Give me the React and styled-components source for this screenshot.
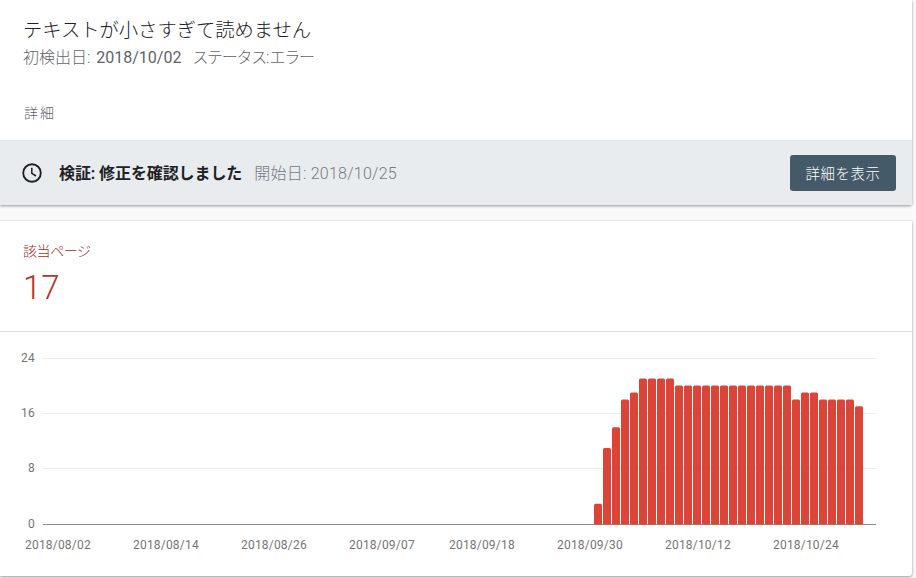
import styled, { createGlobalStyle } from "styled-components";

const GlobalStyle = createGlobalStyle`
  html, body {
    margin: 0;
    padding: 0;
    background: #fafafa;
  }
  body {
    font-family: Roboto, "Noto Sans CJK JP", sans-serif;
    overflow: hidden;
  }
`;

const Page = styled.div`
  width: 912px;
  height: 578px;
  display: flex;
  flex-direction: column;
  gap: 16px;
`;

const Card = styled.section`
  background: #fff;
  border-radius: 0 0 3px 0;
  box-shadow: 0 1px 3px rgba(60, 64, 67, 0.55);
`;

const IssueHead = styled.div`
  height: 141px;
  box-sizing: border-box;
  padding: 18px 24px 0;
  border-bottom: 1px solid #e3e5e7;
`;

const Title = styled.h1`
  margin: 0 0 0 -1px;
  font-size: 19.3px;
  line-height: 25px;
  font-weight: 300;
  color: #202124;
`;

const Meta = styled.div`
  display: flex;
  gap: 11px;
  margin: 3px 0 0 -1px;
  font-size: 16px;
  line-height: 24px;
  font-weight: 300;
  color: #5f6368;
`;

const DateText = styled.span`
  margin-left: 2px;
  font-weight: 400;
`;

const StatusText = styled.span`
  letter-spacing: -1.3px;
  word-spacing: -1px;
`;

const Details = styled.div`
  margin-top: 33px;
  font-size: 14px;
  line-height: 20px;
  font-weight: 300;
  letter-spacing: 2px;
  color: #5f6368;
`;

const ValidationBar = styled.div`
  height: 64px;
  display: flex;
  align-items: center;
  padding: 0 16px 0 22px;
  background: #e9ecef;
`;

const ClockIcon = styled.svg`
  width: 20px;
  height: 20px;
  margin-right: 17px;
  flex: none;
`;

const ValidationLabel = styled.strong`
  padding-bottom: 2px;
  font-size: 16px;
  font-weight: 700;
  letter-spacing: -0.1px;
  color: #202124;
`;

const ValidationDate = styled.span`
  margin-left: 12px;
  padding-bottom: 2px;
  font-size: 16px;
  font-weight: 300;
  letter-spacing: 0.25px;
  color: #757a80;
`;

const DetailButton = styled.button`
  margin-left: auto;
  width: 106px;
  height: 36px;
  padding: 0 0 2px;
  border: none;
  border-radius: 3px;
  background: #455a68;
  color: #fff;
  font-family: inherit;
  font-size: 14.4px;
  font-weight: 300;
  letter-spacing: 0.6px;
`;

const AffectedHead = styled.div`
  height: 111px;
  box-sizing: border-box;
  padding: 20px 24px 0 23px;
  border-bottom: 1px solid #e0e0e0;
`;

const AffectedLabel = styled.div`
  font-size: 14px;
  line-height: 20px;
  font-weight: 300;
  letter-spacing: -0.4px;
  color: #a8291f;
`;

const AffectedCount = styled.div`
  margin-top: 8px;
  font-size: 33px;
  line-height: 38px;
  font-weight: 300;
  color: #b3362b;
`;

const ChartWrap = styled.div`
  height: 244px;
`;

const Chart = styled.svg`
  display: block;
  width: 912px;
  height: 244px;
`;

const AxisText = styled.text`
  font-family: Roboto, sans-serif;
  font-size: 12px;
  letter-spacing: 0.2px;
  fill: #757575;
`;

const COUNTS = [
  3, 11, 14, 18, 19, 21, 21, 21, 21, 20, 20, 20, 20, 20, 20, 20, 20, 20, 20, 20, 20, 20,
  18, 19, 19, 18, 18, 18, 18, 17,
];
// y of each grid line inside the svg, which starts at y=332 on the page
const Y_TICKS = [
  [24, 26.5],
  [16, 81.5],
  [8, 136.5],
  [0, 192.5],
];
const X_TICKS = [
  ["2018/08/02", 25],
  ["2018/08/14", 133],
  ["2018/08/26", 241],
  ["2018/09/07", 349],
  ["2018/09/18", 449],
  ["2018/09/30", 557],
  ["2018/10/12", 665],
  ["2018/10/24", 773],
];

const BASE_Y = 192.5;
const UNIT = 6.95;

const AffectedChart = () => (
  <Chart viewBox="0 0 912 244">
    {Y_TICKS.map(([tick, y]) => (
      <g key={tick}>
        <line x1="43" x2="876" y1={y} y2={y} stroke={tick === 0 ? "#8c8c8c" : "#ececec"} />
        <AxisText x="35" y={y + 3.5} textAnchor="end">
          {tick}
        </AxisText>
      </g>
    ))}
    {COUNTS.map((count, i) => {
      const h = count * UNIT;
      const x = 594 + i * 9;
      const y = BASE_Y - h;
      return (
        <path
          key={i}
          d={`M${x} ${BASE_Y}V${y + 1.5}Q${x} ${y} ${x + 1.5} ${y}H${x + 6.5}Q${x + 8} ${y} ${x + 8} ${y + 1.5}V${BASE_Y}Z`}
          fill="#db4437"
        />
      );
    })}
    {X_TICKS.map(([label, x]) => (
      <AxisText key={label} x={x} y="217">
        {label}
      </AxisText>
    ))}
  </Chart>
);

export default function App() {
  return (
    <Page>
      <GlobalStyle />
      <Card>
        <IssueHead>
          <Title>テキストが小さすぎて読めません</Title>
          <Meta>
            <span>
              初検出日: <DateText>2018/10/02</DateText>
            </span>
            <StatusText>ステータス: エラー</StatusText>
          </Meta>
          <Details>詳細</Details>
        </IssueHead>
        <ValidationBar>
          <ClockIcon viewBox="0 0 20 20" fill="none" stroke="#202124">
            <circle cx="10" cy="10" r="8.8" strokeWidth="1.9" />
            <path d="M9.8 4.8V10.4L14 13" strokeWidth="1.5" />
          </ClockIcon>
          <ValidationLabel>検証: 修正を確認しました</ValidationLabel>
          <ValidationDate>開始日: 2018/10/25</ValidationDate>
          <DetailButton type="button">詳細を表示</DetailButton>
        </ValidationBar>
      </Card>
      <Card>
        <AffectedHead>
          <AffectedLabel>該当ページ</AffectedLabel>
          <AffectedCount>17</AffectedCount>
        </AffectedHead>
        <ChartWrap>
          <AffectedChart />
        </ChartWrap>
      </Card>
    </Page>
  );
}
